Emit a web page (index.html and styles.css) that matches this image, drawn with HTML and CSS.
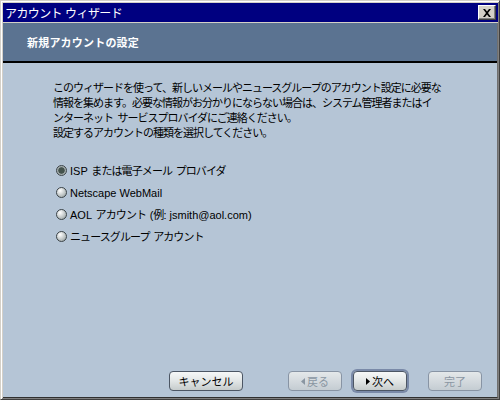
FILE: index.html
```html
<!DOCTYPE html>
<html lang="ja">
<head>
<meta charset="utf-8">
<title>アカウント ウィザード</title>
<link rel="stylesheet" href="styles.css">
</head>
<body>
<div class="window">
  <div class="titlebar">
    <span class="title">アカウント ウィザード</span>
    <span class="close">
      <svg width="10" height="8" viewBox="0 0 10 8"><path d="M1 0h2l2 2.5L7 0h2L6 4l3 4H7L5 5.5 3 8H1l3-4z" fill="#000"/></svg>
    </span>
  </div>
  <div class="client">
    <div class="header">新規アカウントの設定</div>
    <div class="content">
      <p class="intro">このウィザードを使って、新しいメールやニュースグループのアカウント設定に必要な<br>情報を集めます。必要な情報がお分かりにならない場合は、システム管理者またはイ<br>ンターネット サービスプロバイダにご連絡ください。</p>
      <p class="prompt">設定するアカウントの種類を選択してください。</p>
      <ul class="options">
        <li class="option"><span class="radio checked"></span><span class="label"><span class="lat">ISP</span> または電子メール プロバイダ</span></li>
        <li class="option"><span class="radio"></span><span class="label"><span class="lat">Netscape WebMail</span></span></li>
        <li class="option"><span class="radio"></span><span class="label"><span class="lat">AOL</span> アカウント <span class="lat">(</span>例<span class="lat">: jsmith@aol.com)</span></span></li>
        <li class="option"><span class="radio"></span><span class="label">ニュースグループ アカウント</span></li>
      </ul>
      <div class="footer">
        <button class="btn btn-cancel">キャンセル</button>
        <button class="btn btn-back" disabled><svg class="tri" width="4" height="7" viewBox="0 0 4 7"><path d="M4 0v7L0 3.5z" fill="currentColor"/></svg>戻る</button>
        <button class="btn btn-next"><svg class="tri" width="4" height="7" viewBox="0 0 4 7"><path d="M0 0v7l4-3.5z" fill="currentColor"/></svg>次へ</button>
        <button class="btn btn-finish" disabled>完了</button>
      </div>
    </div>
  </div>
</div>
</body>
</html>
```
FILE: styles.css
```css
html, body {
  margin: 0;
  padding: 0;
}
body {
  width: 500px;
  height: 400px;
  overflow: hidden;
  font-family: "Noto Sans CJK JP", "DejaVu Sans", sans-serif;
  font-size: 11px;
}
.window {
  box-sizing: border-box;
  width: 500px;
  height: 400px;
  background: #d4d0c8;
  border-top: 1px solid #d4d0c8;
  border-left: 1px solid #d4d0c8;
  border-right: 1px solid #404040;
  border-bottom: 1px solid #404040;
  padding: 2px 1px 1px 2px;
  display: flex;
  flex-direction: column;
  box-shadow: inset 1px 1px 0 #ffffff, inset -1px -1px 0 #808080;
}
.titlebar {
  height: 19px;
  background: #000080;
  color: #ffffff;
  display: flex;
  align-items: center;
  justify-content: space-between;
  padding: 0 2px 0 2px;
  flex: none;
}
.title {
  font-size: 12px;
  letter-spacing: -0.6px;
  word-spacing: 1px;
  line-height: 19px;
}
.close {
  box-sizing: border-box;
  width: 18px;
  height: 15px;
  background: #d4d0c8;
  border-top: 1px solid #ffffff;
  border-left: 1px solid #ffffff;
  border-right: 1px solid #404040;
  border-bottom: 1px solid #404040;
  box-shadow: inset -1px -1px 0 #808080;
  display: flex;
  align-items: center;
  justify-content: center;
}
.client {
  flex: 1;
  margin-top: 1px;
  display: flex;
  flex-direction: column;
  background: #b5c5d6;
  border-right: 1px solid #6f6f6f;
  border-bottom: 1px solid #303030;
}
.header {
  flex: none;
  height: 38px;
  background: #5b7391;
  border-bottom: 2px solid #000000;
  color: #ffffff;
  font-weight: bold;
  font-size: 11px;
  letter-spacing: 0.2px;
  line-height: 38px;
  padding-left: 24px;
}
.content {
  flex: 1;
  display: flex;
  flex-direction: column;
  padding: 17px 0 0 50px;
}
.intro, .prompt {
  margin: 0;
  line-height: 15px;
  letter-spacing: -1px;
  word-spacing: 3px;
  white-space: nowrap;
  color: #000000;
}
.options {
  list-style: none;
  margin: 19px 0 0 0;
  padding: 0 0 0 3px;
}
.option {
  height: 22px;
  display: flex;
  align-items: center;
}
.radio {
  box-sizing: border-box;
  width: 11px;
  height: 11px;
  border-radius: 50%;
  border: 1px solid #3c4448;
  background: radial-gradient(circle at 35% 30%, #ffffff 0, #d8dcdc 35%, #8e9898 100%);
  margin-right: 3px;
  flex: none;
}
.radio.checked {
  background: radial-gradient(circle, #44524c 0, #44524c 45%, #9aa4a4 55%, #c8cece 100%);
}
.label {
  font-family: "Noto Sans CJK JP", sans-serif;
  font-size: 11px;
  letter-spacing: -0.9px;
  word-spacing: 2px;
  white-space: nowrap;
}
.lat {
  font-family: "Liberation Sans", sans-serif;
  letter-spacing: 0;
  word-spacing: 0;
}
.footer {
  margin-top: auto;
  display: flex;
  align-items: center;
  padding: 0 0 6px 116px;
}
.btn {
  box-sizing: border-box;
  height: 20px;
  border: 1px solid #4c5664;
  border-radius: 4px;
  background: linear-gradient(#f6f8f8, #e2e6e6 50%, #c6cccc);
  font-family: "Noto Sans CJK JP", sans-serif;
  font-size: 11px;
  color: #000000;
  padding: 0;
  display: flex;
  align-items: center;
  justify-content: center;
  gap: 1px;
  line-height: 1;
}
.btn:disabled {
  border-color: #8894a4;
  color: #8a96a2;
  background: linear-gradient(#e4e8ea, #c4ccd2);
}
.btn-cancel {
  width: 74px;
}
.btn-back {
  width: 54px;
  margin-left: 45px;
}
.btn-next {
  width: 54px;
  margin-left: 11px;
  box-shadow: 0 0 0 2px #7a8aa8;
}
.btn-finish {
  width: 54px;
  margin-left: 21px;
}
.tri {
  margin-right: 1px;
}
```
